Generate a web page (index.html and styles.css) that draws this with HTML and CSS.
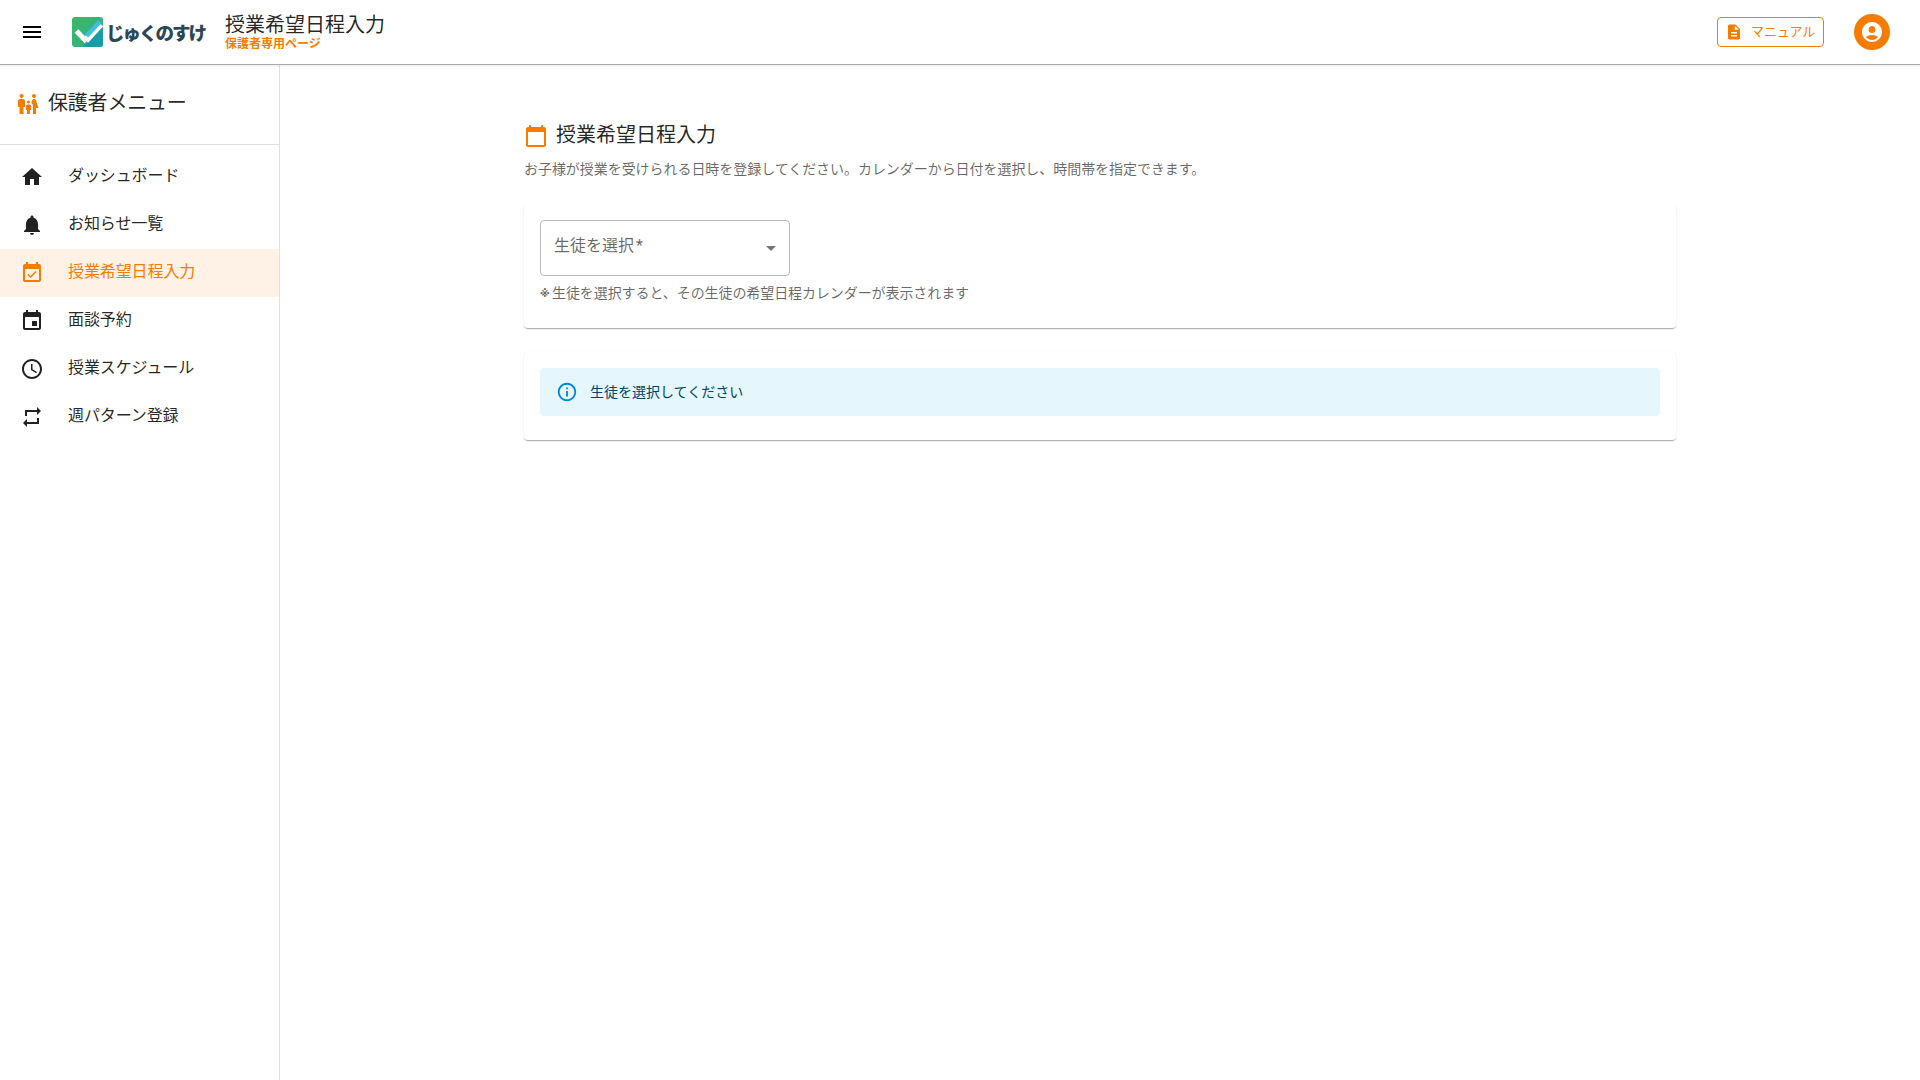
FILE: index.html
```html
<!DOCTYPE html>
<html lang="ja">
<head>
<meta charset="utf-8">
<title>授業希望日程入力</title>
<link rel="stylesheet" href="styles.css">
</head>
<body>
<header class="appbar">
  <svg class="icon menu-icon" viewBox="0 0 24 24"><path d="M3 18h18v-2H3v2zm0-5h18v-2H3v2zm0-7v2h18V6H3z"/></svg>
  <div class="logo">
    <svg class="logo-mark" viewBox="0 0 31 30">
      <defs><linearGradient id="lg" x1="0" y1="0" x2="1" y2="1"><stop offset="0" stop-color="#3fb768"/><stop offset=".6" stop-color="#34b27a"/><stop offset="1" stop-color="#1a9fa8"/></linearGradient></defs>
      <rect width="31" height="30" rx="3" fill="url(#lg)"/>
      <path d="M31 10V27a3 3 0 0 1-3 3H11z" fill="#149aae" opacity=".8"/>
      <path d="M4.500 14L14.500 24.500" stroke="#fff" stroke-width="5" fill="none"/>
      <path d="M13.500 23.500L28.500 7" stroke="#fff" stroke-width="7" fill="none"/>
      <path d="M14.500 19L28 4.500" stroke="#3fbde8" stroke-width="4.500" fill="none"/>
    </svg>
    <span class="logo-text">じゅくのすけ</span>
  </div>
  <div class="titles">
    <div class="app-title">授業希望日程入力</div>
    <div class="app-sub">保護者専用ページ</div>
  </div>
  <div class="spacer"></div>
  <a class="manual">
    <svg class="icon manual-icon" viewBox="0 0 24 24"><path d="M14 2H6c-1.100 0-1.990.9-1.990 2L4 20c0 1.100.89 2 2 2h12c1.100 0 2-.9 2-2V8l-6-6zm2 16H8v-2h8v2zm0-4H8v-2h8v2zm-3-5V3.500L18.500 9H13z"/></svg>
    <span>マニュアル</span>
  </a>
  <div class="avatar">
    <svg class="icon avatar-icon" viewBox="0 0 24 24"><path d="M12 2C6.480 2 2 6.480 2 12s4.480 10 10 10 10-4.480 10-10S17.520 2 12 2zm0 4c1.930 0 3.500 1.570 3.500 3.500S13.930 13 12 13s-3.500-1.570-3.500-3.500S10.070 6 12 6zm0 14c-2.030 0-4.430-.82-6.140-2.880C7.550 15.800 9.680 15 12 15s4.450.8 6.140 2.120C16.430 19.180 14.030 20 12 20z"/></svg>
  </div>
</header>
<div class="body">
  <aside class="sidebar">
    <div class="side-head">
      <svg class="icon side-head-icon" viewBox="0 0 24 24"><path d="M16 4c0-1.110.89-2 2-2s2 .89 2 2-.89 2-2 2-2-.89-2-2zm4 18v-6h2.500l-2.540-7.630C19.680 7.550 18.920 7 18.060 7h-.12c-.86 0-1.630.55-1.900 1.370l-.86 2.580c1.080.6 1.820 1.730 1.820 3.050v8h3zm-7.500-10.500c.83 0 1.500-.67 1.500-1.500s-.67-1.500-1.500-1.500S11 9.170 11 10s.67 1.500 1.500 1.500zM5.500 6c1.110 0 2-.89 2-2s-.89-2-2-2-2 .89-2 2 .89 2 2 2zm2 16v-7H9V9c0-1.100-.9-2-2-2H4c-1.100 0-2 .9-2 2v6h1.500v7h4zm6.500 0v-4h1v-4c0-.82-.68-1.500-1.500-1.500h-2c-.82 0-1.500.68-1.500 1.500v4h1v4h3z"/></svg>
      <span>保護者メニュー</span>
    </div>
    <nav class="nav">
      <a class="nav-item"><svg class="icon" viewBox="0 0 24 24"><path d="M10 20v-6h4v6h5v-8h3L12 3 2 12h3v8z"/></svg><span>ダッシュボード</span></a>
      <a class="nav-item"><svg class="icon" viewBox="0 0 24 24"><path d="M12 22c1.100 0 2-.9 2-2h-4c0 1.100.89 2 2 2zm6-6v-5c0-3.070-1.640-5.640-4.500-6.320V4c0-.83-.67-1.500-1.500-1.500s-1.500.67-1.500 1.500v.68C7.630 5.360 6 7.920 6 11v5l-2 2v1h16v-1l-2-2z"/></svg><span>お知らせ一覧</span></a>
      <a class="nav-item active"><svg class="icon" viewBox="0 0 24 24"><path d="M16.530 11.060 15.470 10l-4.880 4.880-2.120-2.120-1.060 1.060L10.590 17l5.940-5.940zM19 3h-1V1h-2v2H8V1H6v2H5c-1.110 0-1.990.9-1.990 2L3 19c0 1.100.89 2 2 2h14c1.100 0 2-.9 2-2V5c0-1.100-.9-2-2-2zm0 16H5V8h14v11z"/></svg><span>授業希望日程入力</span></a>
      <a class="nav-item"><svg class="icon" viewBox="0 0 24 24"><path d="M17 12h-5v5h5v-5zM16 1v2H8V1H6v2H5c-1.110 0-1.990.9-1.990 2L3 19c0 1.100.89 2 2 2h14c1.100 0 2-.9 2-2V5c0-1.100-.9-2-2-2h-1V1h-2zm3 18H5V8h14v11z"/></svg><span>面談予約</span></a>
      <a class="nav-item"><svg class="icon" viewBox="0 0 24 24"><path d="M11.990 2C6.470 2 2 6.480 2 12s4.470 10 9.990 10C17.520 22 22 17.520 22 12S17.520 2 11.990 2zM12 20c-4.420 0-8-3.580-8-8s3.580-8 8-8 8 3.580 8 8-3.580 8-8 8zm.5-13H11v6l5.250 3.150.75-1.230-4.500-2.670z"/></svg><span>授業スケジュール</span></a>
      <a class="nav-item"><svg class="icon" viewBox="0 0 24 24"><path d="M7 7h10v3l4-4-4-4v3H5v6h2V7zm10 10H7v-3l-4 4 4 4v-3h12v-6h-2v4z"/></svg><span>週パターン登録</span></a>
    </nav>
  </aside>
  <main class="main">
    <div class="container">
      <div class="page-title">
        <svg class="icon title-icon" viewBox="0 0 24 24"><path d="M20 3h-1V1h-2v2H7V1H5v2H4c-1.100 0-2 .9-2 2v16c0 1.100.9 2 2 2h16c1.100 0 2-.9 2-2V5c0-1.100-.9-2-2-2zm0 18H4V8h16v13z"/></svg>
        <h1>授業希望日程入力</h1>
      </div>
      <p class="desc">お子様が授業を受けられる日時を登録してください。カレンダーから日付を選択し、時間帯を指定できます。</p>
      <section class="card">
        <div class="select">
          <span class="select-label">生徒を選択 *</span>
          <svg class="select-arrow" viewBox="0 0 24 24"><path d="M7 10l5 5 5-5z"/></svg>
        </div>
        <div class="helper"><span class="kome">※</span><span>生徒を選択すると、その生徒の希望日程カレンダーが表示されます</span></div>
      </section>
      <section class="card">
        <div class="alert">
          <svg class="alert-icon" viewBox="0 0 24 24"><path d="M11 7h2v2h-2zm0 4h2v6h-2zm1-9C6.480 2 2 6.480 2 12s4.480 10 10 10 10-4.480 10-10S17.520 2 12 2zm0 18c-4.410 0-8-3.590-8-8s3.590-8 8-8 8 3.590 8 8-3.590 8-8 8z"/></svg>
          <span class="alert-text">生徒を選択してください</span>
        </div>
      </section>
    </div>
  </main>
</div>
</body>
</html>
```

FILE: styles.css
```css
* { box-sizing: border-box; }
html, body { margin: 0; height: 100%; overflow: hidden; }
body {
  display: flex;
  flex-direction: column;
  background: #fff;
  color: rgba(0, 0, 0, 0.87);
  font-family: Roboto, "Noto Sans CJK JP", sans-serif;
}
.icon { width: 24px; height: 24px; fill: currentColor; flex: none; display: block; }

.appbar {
  height: 65px;
  flex: none;
  display: flex;
  align-items: center;
  padding: 0 30px 1px 20px;
  border-bottom: 1px solid #aaa;
  box-shadow: 0 1px 2px rgba(0, 0, 0, 0.08);
  position: relative;
  z-index: 2;
  background: #fff;
}
.menu-icon { color: #000; margin-right: 28px; }
.logo { display: flex; align-items: center; margin-right: 20px; }
.logo-mark { width: 31px; height: 30px; display: block; }
.logo-text {
  font-size: 18.500px;
  font-weight: 900;
  color: #2b4555;
  margin-left: 3px;
  letter-spacing: -2px;
  white-space: nowrap;
}
.titles { display: flex; flex-direction: column; margin-top: -1px; }
.app-title { font-size: 20px; line-height: 24px; }
.app-sub { font-size: 12px; line-height: 12px; font-weight: 700; color: #f57c00; margin-top: 1px; }
.spacer { flex: 1; }
.manual {
  display: flex;
  align-items: center;
  width: 107px;
  height: 30px;
  border: 1px solid #f57c00;
  border-radius: 4px;
  color: #f57c00;
  font-size: 13px;
  padding-left: 7px;
  margin-right: 30px;
}
.manual span { margin-bottom: 2px; letter-spacing: -0.1px; }
.manual-icon { width: 18px; height: 18px; margin-right: 8px; }
.avatar {
  width: 36px;
  height: 36px;
  border-radius: 50%;
  background: #f57c00;
  color: #fff;
  display: flex;
  align-items: center;
  justify-content: center;
}

.body { flex: 1; display: flex; min-height: 0; }
.sidebar { width: 280px; flex: none; border-right: 1px solid #e0e0e0; }
.side-head {
  height: 80px;
  display: flex;
  align-items: center;
  padding: 0 16px;
  gap: 8px;
  font-size: 20px;
  letter-spacing: -0.2px;
  border-bottom: 1px solid #e0e0e0;
}
.side-head-icon { color: #f57c00; margin-bottom: 2px; }
.side-head span { margin-bottom: 6px; }
.nav { padding-top: 8px; }
.nav-item {
  height: 48px;
  display: flex;
  align-items: center;
  padding: 0 20px;
  font-size: 16px;
  letter-spacing: -0.1px;
  color: rgba(0, 0, 0, 0.87);
}
.nav-item span { margin: 0 0 6px 24px; }
.nav-item.active { background: #fef2e6; color: #f57c00; }

.main { flex: 1; display: flex; justify-content: center; min-width: 0; }
.container { width: 1200px; padding: 55px 24px 0; }
.page-title { display: flex; align-items: center; height: 32px; gap: 8px; }
.page-title h1 { margin: 0 0 5px; font-size: 20px; font-weight: 400; }
.title-icon { color: #f57c00; }
.desc { margin: 7px 0 24px; font-size: 14px; line-height: 21px; letter-spacing: -0.05px; color: rgba(0, 0, 0, 0.6); }
.card {
  background: #fff;
  border-radius: 4px;
  padding: 16px 16px 24px;
  margin-bottom: 24px;
  box-shadow: 0 2px 1px -1px rgba(0,0,0,.2), 0 1px 1px 0 rgba(0,0,0,.14), 0 1px 3px 0 rgba(0,0,0,.06);
}
.select {
  width: 250px;
  height: 56px;
  border: 1px solid rgba(0, 0, 0, 0.28);
  border-radius: 4px;
  display: flex;
  align-items: center;
  justify-content: space-between;
  padding: 0 6px 0 13px;
  color: rgba(0, 0, 0, 0.6);
  font-size: 16px;
}
.select-label { margin-top: -8px; word-spacing: -2px; }
.select-arrow { width: 24px; height: 24px; fill: rgba(0, 0, 0, 0.54); }
.helper {
  display: flex;
  align-items: center;
  height: 21px;
  margin: 5px 0 2px;
  font-size: 14px;
  letter-spacing: -0.08px;
  color: rgba(0, 0, 0, 0.6);
}
.kome { width: 12px; flex: none; font-family: "DejaVu Sans", sans-serif; font-size: 10px; font-weight: 700; line-height: 1; margin-top: 5px; }
.alert {
  height: 48px;
  background: #e5f6fd;
  border-radius: 4px;
  display: flex;
  align-items: center;
  padding: 0 16px;
  font-size: 14px;
  color: #014361;
}
.alert-text { margin-bottom: 2px; }
.alert-icon { width: 22px; height: 22px; fill: #0288d1; margin-right: 12px; flex: none; }
```
